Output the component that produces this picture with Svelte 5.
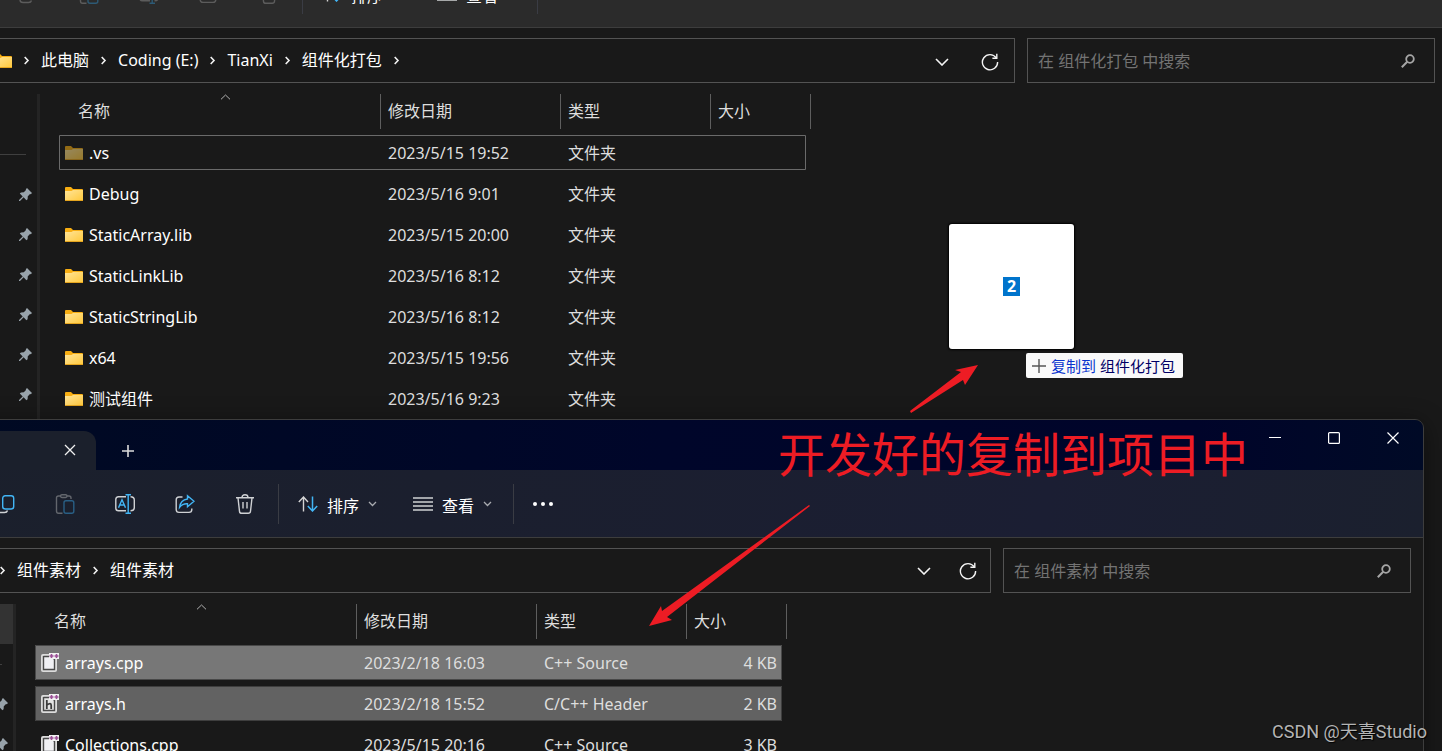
<script>
  const windows = [
    {
      id: 'target',
      active: false,
      crumbs: ['此电脑', 'Coding (E:)', 'TianXi', '组件化打包'],
      trailing: true,
      search: '在 组件化打包 中搜索',
      pins: 6,
      rows: [
        { icon: 'folder', faded: true, name: '.vs', date: '2023/5/15 19:52', type: '文件夹', size: '', state: 'focused' },
        { icon: 'folder', name: 'Debug', date: '2023/5/16 9:01', type: '文件夹', size: '' },
        { icon: 'folder', name: 'StaticArray.lib', date: '2023/5/15 20:00', type: '文件夹', size: '' },
        { icon: 'folder', name: 'StaticLinkLib', date: '2023/5/16 8:12', type: '文件夹', size: '' },
        { icon: 'folder', name: 'StaticStringLib', date: '2023/5/16 8:12', type: '文件夹', size: '' },
        { icon: 'folder', name: 'x64', date: '2023/5/15 19:56', type: '文件夹', size: '' },
        { icon: 'folder', name: '测试组件', date: '2023/5/16 9:23', type: '文件夹', size: '' }
      ]
    },
    {
      id: 'source',
      active: true,
      crumbs: ['组件素材', '组件素材'],
      trailing: false,
      search: '在 组件素材 中搜索',
      pins: 2,
      rows: [
        { icon: 'cpp', name: 'arrays.cpp', date: '2023/2/18 16:03', type: 'C++ Source', size: '4 KB', state: 'hot' },
        { icon: 'header', name: 'arrays.h', date: '2023/2/18 15:52', type: 'C/C++ Header', size: '2 KB', state: 'selected' },
        { icon: 'cpp', name: 'Collections.cpp', date: '2023/5/15 20:16', type: 'C++ Source', size: '3 KB' }
      ]
    }
  ];
</script>

{#snippet folder(faded)}
  <svg class="folder" class:faded width="18" height="14" viewBox="0 0 18 14" aria-hidden="true">
    <defs>
      <linearGradient id="folder-front" x1="0" y1="0" x2="1" y2="1">
        <stop offset="0" stop-color="#ffe59a" />
        <stop offset="1" stop-color="#ffc83a" />
      </linearGradient>
    </defs>
    <path d="M0 1Q0 0 1 0H6L8 2H17Q18 2 18 3V8H0Z" fill="#f8ae12" />
    <path d="M0 4H6.5L8 3H18V13Q18 14 17 14H1Q0 14 0 13Z" fill="url(#folder-front)" />
    <path d="M0 13.5H18" stroke="#e5a51f" />
  </svg>
{/snippet}

{#snippet sourceFile(kind)}
  <svg width="18" height="20" viewBox="0 0 18 20" aria-hidden="true">
    <rect x="0" y="1" width="16" height="18" rx="2" fill="#dcdcdc" />
    <path d="M2.5 3V16.5H13.5V6.5L10.5 3.5H2.5Z" fill={kind === 'header' ? '#e4e4e4' : '#f0f0f4'} stroke="#4a4a4a" stroke-width="1.4" />
    <path d="M8 0H18V6H8Z" fill="#f2f2f2" />
    <path d="M8.5 3H12.5M10.5 1V5M13.5 3H17.5M15.5 1V5" stroke="#9b4f96" stroke-width="1.6" />
    {#if kind === 'header'}
      <path d="M5.8 6V15M5.8 11Q10.2 8 10.2 11.5V15" fill="none" stroke="#3c3c3c" stroke-width="1.8" />
    {/if}
  </svg>
{/snippet}

{#snippet crumbArrow()}
  <svg width="7" height="9" viewBox="0 0 7 9" aria-hidden="true">
    <path d="M1.7 1L5 4.5L1.7 8" fill="none" stroke="#f2f2f2" stroke-width="1.6" />
  </svg>
{/snippet}

{#snippet smallArrow()}
  <svg width="9" height="6" viewBox="0 0 9 6" aria-hidden="true">
    <path d="M1 1L4.5 4.5L8 1" fill="none" stroke="#a9abb0" stroke-width="1.3" />
  </svg>
{/snippet}

<main class="desktop">
  {#each windows as win (win.id)}
    <section class="window {win.id}" class:active={win.active}>
      <header class="titlebar">
        <div class="tab">
          <button class="tab-close" aria-label="关闭标签页">
            <svg width="12" height="12" viewBox="0 0 12 12"><path d="M1 1L11 11M11 1L1 11" stroke="#f0f0f0" stroke-width="1.3" /></svg>
          </button>
        </div>
        <button class="tab-add" aria-label="新建标签页">
          <svg width="12" height="12" viewBox="0 0 12 12"><path d="M0 6H12M6 0V12" stroke="#dcdcdc" stroke-width="1.6" /></svg>
        </button>
        <div class="controls">
          <button aria-label="最小化">
            <svg width="12" height="12" viewBox="0 0 12 12"><path d="M0 5.5H12" stroke="#fff" /></svg>
          </button>
          <button aria-label="最大化">
            <svg width="12" height="12" viewBox="0 0 12 12"><rect x=".6" y=".6" width="10.8" height="10.8" rx="1" fill="none" stroke="#fff" stroke-width="1.2" /></svg>
          </button>
          <button aria-label="关闭">
            <svg width="12" height="12" viewBox="0 0 12 12"><path d="M.5 .5L11.5 11.5M11.5 .5L.5 11.5" stroke="#fff" stroke-width="1.2" /></svg>
          </button>
        </div>
      </header>

      <div class="toolbar">
        <button class="tool" aria-label="剪切">
          <svg width="20" height="20" viewBox="0 0 20 20"><path d="M6 1L13 14M14 1L7 14" /><circle cx="5.5" cy="16" r="2.5" class="accent" /><circle cx="14.5" cy="16" r="2.5" class="accent" /></svg>
        </button>
        <button class="tool" aria-label="复制">
          <svg width="20" height="20" viewBox="0 0 20 20">
            <path d="M5 5H3.5Q1 5 1 7.5V15.5Q1 18.5 4 18.5H9.5Q12 18.5 12.5 16.5" />
            <rect x="7.7" y="1.7" width="11" height="13.3" rx="2.5" class="accent" />
          </svg>
        </button>
        <button class="tool off" aria-label="粘贴">
          <svg width="20" height="20" viewBox="0 0 20 20">
            <path d="M6 2H3.5Q1.5 2 1.5 4V17Q1.5 19.3 3.5 19.3H7.5M12 2H14Q16 2 16 4V5" />
            <rect x="5.5" y=".7" width="6.5" height="2.8" rx="1.4" />
            <rect x="9" y="6.7" width="9.8" height="12.6" rx="2" class="accent" />
          </svg>
        </button>
        <button class="tool" aria-label="重命名">
          <svg width="20" height="20" viewBox="0 0 20 20">
            <path d="M11 2.8H3.5Q.8 2.8 .8 5.5V14Q.8 16.8 3.5 16.8H11M15.5 2.8Q19.3 2.8 19.3 6V13.5Q19.3 16.8 15.5 16.8" />
            <path d="M3.5 13.8L7 5.8L10.5 13.8M4.8 11H9.2M13.2 .8V19.2M10.5 .8H16M10.5 19.2H16" class="accent" />
          </svg>
        </button>
        <button class="tool" aria-label="共享">
          <svg width="20" height="20" viewBox="0 0 20 20">
            <path d="M7.5 3H4Q1.2 3 1.2 5.8V15.5Q1.2 18.4 4 18.4H14Q16.8 18.4 16.8 15.5V14.5" />
            <path d="M12.5 1.8L19 7.3L12.5 12.8V9.8Q7.5 9.5 4.6 13.3Q5.5 5.8 12.5 5Z" class="accent" />
          </svg>
        </button>
        <button class="tool" aria-label="删除">
          <svg width="20" height="20" viewBox="0 0 20 20">
            <path d="M1 3.7H19M7 3.5Q7 .8 10 .8Q13 .8 13 3.5M3 4L4.5 17.3Q4.7 19.3 6.7 19.3H13.3Q15.3 19.3 15.5 17.3L17 4M8 8V14.5M12 8V14.5" />
          </svg>
        </button>
        <span class="divider"></span>
        <button class="menu">
          <svg width="20" height="16" viewBox="0 0 20 16" aria-hidden="true">
            <path d="M5.5 15.5V1.5M.8 6L5.5 1L10 6" fill="none" stroke="#d4d4d4" stroke-width="1.4" />
            <path d="M14.5 .5V14.5M9.8 10L14.5 15L19.2 10" fill="none" stroke="#42b5f5" stroke-width="1.5" />
          </svg>
          <span class="caption">排序</span>
          {@render smallArrow()}
        </button>
        <button class="menu">
          <svg width="20" height="14" viewBox="0 0 20 14" aria-hidden="true"><path d="M0 1H20M0 5H20M0 9H20M0 13H20" stroke="#d0d2d4" stroke-width="1.4" /></svg>
          <span class="caption">查看</span>
          {@render smallArrow()}
        </button>
        <span class="divider"></span>
        <button class="menu" aria-label="更多">
          <svg width="20" height="4" viewBox="0 0 20 4"><circle cx="2" cy="2" r="2" fill="#fff" /><circle cx="10" cy="2" r="2" fill="#fff" /><circle cx="18" cy="2" r="2" fill="#fff" /></svg>
        </button>
      </div>

      <div class="location">
        <nav class="address" aria-label="地址">
          {@render folder(false)}
          {#each win.crumbs as crumb}
            {@render crumbArrow()}
            <a href="#{win.id}">{crumb}</a>
          {/each}
          {#if win.trailing}{@render crumbArrow()}{/if}
          <div class="address-actions">
            <button aria-label="以前的位置">
              <svg width="14" height="8" viewBox="0 0 14 8"><path d="M1 1L7 7L13 1" fill="none" stroke="#f4f4f4" stroke-width="1.6" /></svg>
            </button>
            <button aria-label="刷新">
              <svg width="18" height="18" viewBox="0 0 18 18">
                <path d="M15.2 4.8A7.6 7.6 0 1 0 16.6 9" fill="none" stroke="#f4f4f4" stroke-width="1.4" />
                <path d="M15.8 .8V5.2H11.4" fill="none" stroke="#f4f4f4" stroke-width="1.4" />
              </svg>
            </button>
          </div>
        </nav>
        <label class="search">
          <input type="search" placeholder={win.search} aria-label={win.search} />
          <svg width="14" height="14" viewBox="0 0 14 14" aria-hidden="true">
            <circle cx="9" cy="5" r="3.8" fill="none" stroke="#a6a6a6" stroke-width="1.8" />
            <path d="M6.2 7.8L.8 13.2" stroke="#a6a6a6" stroke-width="2" />
          </svg>
        </label>
      </div>

      <div class="body">
        <aside class="places">
          <div class="place" class:current={win.active}></div>
          <div class="place"><hr /></div>
          {#each { length: win.pins } as _}
            <div class="place pin">
              <svg width="13" height="13" viewBox="0 0 13 13" aria-hidden="true">
                <path d="M8 0L13 5L11.8 6.2L11 6L8.8 8.3L8.6 11.2L7.4 12.3L4.6 9.3L1 13L0 12.9V12L3.7 8.4L.8 5.6L2 4.4L4.8 4.3L7 2.1L6.8 1.2Z" fill="#98a3ab" />
              </svg>
            </div>
          {/each}
        </aside>
        <table>
          <thead>
            <tr>
              <th>
                <svg class="sorted" width="11" height="6" viewBox="0 0 11 6" aria-hidden="true"><path d="M1 5.3L5.5 1L10 5.3" fill="none" stroke="#b0b0b0" /></svg>
                名称
              </th>
              <th>修改日期</th>
              <th>类型</th>
              <th>大小</th>
            </tr>
          </thead>
          <tbody>
            {#each win.rows as row}
              <tr class={row.state}>
                <td class="name">
                  {#if row.icon === 'folder'}{@render folder(row.faded)}{:else}{@render sourceFile(row.icon)}{/if}
                  {row.name}
                </td>
                <td>{row.date}</td>
                <td>{row.type}</td>
                <td class="size">{row.size}</td>
              </tr>
            {/each}
          </tbody>
        </table>
      </div>
    </section>
  {/each}

  <div class="drag-card"><span>2</span></div>
  <div class="drag-tip">
    <svg width="14" height="14" viewBox="0 0 14 14" aria-hidden="true"><path d="M0 7H14M7 0V14" stroke="#555" stroke-width="1.4" /></svg>
    <span><span class="action">复制到</span> 组件化打包</span>
  </div>

  <svg class="arrows" aria-hidden="true">
    <polygon points="910,411 961,372 955,370 978,365 965,385 963,380 911,413" />
    <polygon points="810,506 809,505 662,611 661,606 649,626 672,620 667,617" />
  </svg>
  <p class="note">开发好的复制到项目中</p>
  <p class="watermark">CSDN @天喜Studio</p>
</main>

<style>
  :global(body) {
    margin: 0;
    background: #191919;
  }

  .desktop {
    position: relative;
    height: 100vh;
    overflow: hidden;
    background: #191919;
    color: #fff;
    font: 16px/24px 'Noto Sans', 'Noto Sans CJK SC', sans-serif;
  }

  button {
    display: flex;
    align-items: center;
    justify-content: center;
    padding: 0;
    border: 0;
    background: none;
    color: inherit;
    font: inherit;
  }

  svg {
    display: block;
    flex: none;
  }

  .window {
    position: absolute;
    box-sizing: border-box;
    background: #191919;
    border: 1px solid #3d3d3d;
  }

  .target {
    top: -91px;
    bottom: -1px;
    left: -76px;
    right: -6px;
  }

  .source {
    top: 419px;
    left: -100px;
    right: 18px;
    border-radius: 9px;
    overflow: hidden;
    box-shadow: 0 4px 24px rgba(0, 0, 0, 0.45);
  }

  .titlebar {
    display: flex;
    height: 50px;
    background: #202020;
  }

  .active .titlebar {
    background: linear-gradient(90deg, #000a22, #00062a 50%, #00042a 85%, #000a26);
  }

  .tab {
    display: flex;
    justify-content: flex-end;
    box-sizing: border-box;
    width: 195px;
    margin-top: 11px;
    padding-right: 14px;
    border-radius: 0 12px 0 0;
    background: #2c2c2c;
  }

  .active .tab {
    background: #1b202c;
  }

  .tab-close {
    width: 24px;
    height: 37px;
  }

  .tab-add {
    width: 24px;
    margin: 12px 0 0 20px;
  }

  .controls {
    display: flex;
    height: 36px;
    margin-left: auto;
    padding-right: 1px;
  }

  .controls button {
    width: 59px;
  }

  .toolbar {
    display: flex;
    align-items: center;
    height: 67px;
    padding-left: 14px;
    background: #2b2b2b;
    border-bottom: 1px solid #3d3d3d;
  }

  .active .toolbar {
    background: linear-gradient(100deg, #1b202c, #1b1f2e 35%, #1b1e33 75%, #1b202e);
  }

  .tool {
    width: 60px;
    height: 40px;
  }

  .tool svg {
    fill: none;
    stroke: #5c5c5c;
    stroke-width: 1.4;
  }

  .tool .accent {
    stroke: #2d5a75;
  }

  .active .tool svg {
    stroke: #cfd1d4;
  }

  .active .tool .accent {
    stroke: #42b5f5;
  }

  .active .off svg {
    stroke: #63666d;
  }

  .active .off .accent {
    stroke: #295f85;
  }

  .divider {
    width: 1px;
    height: 40px;
    margin: 0 1px 0 3px;
    background: #3a3c44;
  }

  .menu {
    gap: 9px;
    height: 40px;
    padding: 0 18px;
  }

  .caption {
    padding-top: 4px;
  }

  .location {
    display: flex;
    gap: 12px;
    padding: 10px 12px 0 11px;
  }

  .address,
  .search {
    display: flex;
    align-items: center;
    box-sizing: border-box;
    height: 45px;
    border: 1px solid #535353;
  }

  .address {
    flex: 1;
    gap: 11px;
    padding-left: 57px;
  }

  .address a {
    color: #fff;
    line-height: 22px;
    padding-bottom: 2px;
    text-decoration: none;
  }

  .address-actions {
    display: flex;
    margin-left: auto;
  }

  .address-actions button {
    width: 48px;
    height: 40px;
    padding-top: 2px;
  }

  .active .address-actions button {
    width: 44px;
    padding-top: 0;
  }

  .search {
    flex: 0 1 408px;
    padding: 0 19px 0 10px;
  }

  .search input {
    flex: 1;
    min-width: 0;
    padding: 0;
    border: 0;
    outline: 0;
    background: none;
    color: #fff;
    font: inherit;
  }

  .search input::placeholder {
    color: #737373;
    opacity: 1;
  }

  .body {
    display: flex;
    min-height: 340px;
    padding-top: 11px;
  }

  .places {
    box-sizing: border-box;
    width: 115px;
    margin-right: 19px;
    border-right: 3px solid #242424;
  }

  .place {
    display: flex;
    align-items: center;
    height: 40px;
  }

  .place.current {
    background: #333;
  }

  .place hr {
    width: 101px;
    margin: 0;
    border: 0;
    border-top: 1px solid #3f3f3f;
  }

  .pin {
    padding-left: 94px;
  }

  table {
    display: block;
    color: #dedede;
  }

  thead {
    display: block;
    margin-bottom: 8px;
  }

  tbody {
    display: grid;
    justify-content: start;
    gap: 6px;
  }

  tr {
    display: grid;
    grid-template-columns: 322px 180px 150px 95px;
    align-items: center;
    height: 35px;
    border-radius: 1px;
  }

  thead tr {
    grid-template-columns: 322px 180px 150px 100px;
    align-items: stretch;
    height: 33px;
  }

  th {
    position: relative;
    padding: 0 0 0 7px;
    border-right: 1px solid #5e5e5e;
    font-weight: 400;
    line-height: 35px;
    text-align: left;
  }

  th:first-child {
    padding-left: 19px;
  }

  .sorted {
    position: absolute;
    top: 0;
    left: 161px;
  }

  td {
    padding: 0 0 0 7px;
  }

  td.name {
    display: flex;
    align-items: center;
    gap: 6px;
    padding-left: 6px;
    color: #fff;
  }

  td.size {
    padding-right: 5px;
    text-align: right;
  }

  .faded {
    opacity: 0.55;
  }

  .focused {
    box-shadow: inset 0 0 0 1px #6a6a6a;
  }

  .hot {
    background: #777;
    box-shadow: inset 0 0 0 1px #484848;
  }

  .selected {
    background: #626262;
    box-shadow: inset 0 0 0 1px #3e3e3e;
  }

  .drag-card {
    position: absolute;
    top: 224px;
    left: 949px;
    display: grid;
    place-items: center;
    width: 125px;
    height: 125px;
    border-radius: 3px;
    background: #fff;
    box-shadow: 0 0 2px 1px #000;
  }

  .drag-card span {
    width: 17px;
    background: #0074cc;
    font-weight: 700;
    font-size: 16px;
    line-height: 19px;
    text-align: center;
  }

  .drag-tip {
    position: absolute;
    top: 353px;
    left: 1026px;
    display: flex;
    align-items: center;
    gap: 5px;
    box-sizing: border-box;
    height: 25px;
    padding: 0 8px 0 6px;
    border-radius: 2px;
    background: #f9f9f9;
    color: #000066;
    font-size: 15px;
    line-height: 22px;
    white-space: nowrap;
  }

  .action {
    color: #0a35cf;
  }

  .arrows {
    position: absolute;
    inset: 0;
    width: 100%;
    height: 100%;
    fill: #ed1c24;
    pointer-events: none;
  }

  .note {
    position: absolute;
    top: 419px;
    left: 778px;
    margin: 0;
    color: #ed1c24;
    font-size: 47px;
    line-height: 70px;
    white-space: nowrap;
  }

  .watermark {
    position: absolute;
    right: 15px;
    bottom: 7px;
    margin: 0;
    color: #b4b4b4;
    font-family: Roboto, 'Noto Sans CJK SC', sans-serif;
    font-size: 18px;
    text-shadow: 1px 1px 1px #000;
  }
</style>
